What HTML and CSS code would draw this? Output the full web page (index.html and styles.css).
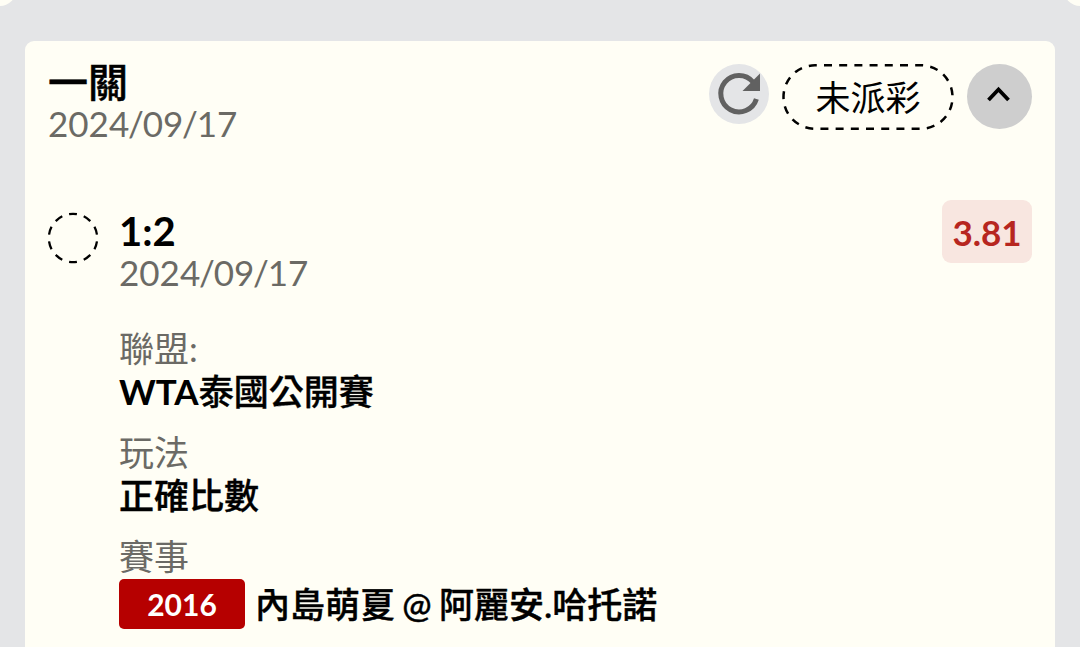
FILE: index.html
```html
<!DOCTYPE html>
<html lang="zh-Hant">
<head>
<meta charset="utf-8">
<title>投注紀錄</title>
<link rel="stylesheet" href="styles.css">
</head>
<body>
<div class="corner corner-left"></div>
<div class="corner corner-right"></div>
<main class="card">
  <header class="head">
    <div class="head-text">
      <h1 class="title">一關</h1>
      <div class="date">2024<span class="slash">/</span>09<span class="slash">/</span>17</div>
    </div>
    <div class="actions">
      <button class="refresh" aria-label="重新整理">
        <svg width="60" height="60" viewBox="0 0 60 60">
          <path d="M47.400 35A18.200 18.200 0 1 1 44 18" fill="none" stroke="#616161" stroke-width="5"/>
          <path d="M51 9.500V27H33.500Z" fill="#616161"/>
        </svg>
      </button>
      <div class="status">
        <svg class="status-border" width="172" height="66" viewBox="0 0 172 66">
          <rect x="1.500" y="1.300" width="169" height="63.400" rx="31.500" pathLength="411" fill="none" stroke="#000" stroke-width="2.500" stroke-dasharray="8 7.222" stroke-dashoffset="-9"/>
        </svg>
        <span class="status-text">未派彩</span>
      </div>
      <button class="collapse" aria-label="收合">
        <svg width="65" height="65" viewBox="0 0 65 65">
          <path d="M21.500 36L31.500 25.500L41.500 36" fill="none" stroke="#000" stroke-width="3.800"/>
        </svg>
      </button>
    </div>
  </header>
  <section class="bet">
    <svg class="marker" width="52" height="52" viewBox="0 0 52 52">
      <circle cx="26" cy="26" r="24.200" pathLength="150" fill="none" stroke="#000" stroke-width="2.300" stroke-dasharray="8 7" stroke-dashoffset="41.500"/>
    </svg>
    <div class="detail">
      <h2 class="pick">1:2</h2>
      <div class="date">2024<span class="slash">/</span>09<span class="slash">/</span>17</div>
      <dl class="fields">
        <dt>聯盟:</dt>
        <dd><span class="league">WTA</span>泰國公開賽</dd>
        <dt>玩法</dt>
        <dd>正確比數</dd>
        <dt>賽事</dt>
        <dd class="match"><span class="code">2016</span><span class="teams">內島萌夏 @ 阿麗安.哈托諾</span></dd>
      </dl>
    </div>
    <div class="odds">3.81</div>
  </section>
</main>
</body>
</html>
```
FILE: styles.css
```css
* { box-sizing: border-box; }
html { overflow: hidden; }
body {
  margin: 0;
  height: 647px;
  overflow: hidden;
  padding: 41px 25px 0;
  background: #e4e5e7;
  color: #000;
  font-family: Lato, "Noto Sans CJK TC", sans-serif;
  font-size: 35px;
  position: relative;
}
h1, h2, dl, dd { margin: 0; }
button { border: 0; padding: 0; border-radius: 50%; }
button svg { display: block; }
.corner {
  position: absolute;
  top: -26px;
  width: 40px;
  height: 32px;
  border-radius: 16px;
  background: #fffef5;
}
.corner-left { left: -24px; }
.corner-right { right: -24px; }
.card {
  height: 606px;
  border-radius: 9px 9px 0 0;
  background: #fffef5;
  padding: 20px 23px 0;
}
.head {
  display: flex;
  justify-content: space-between;
  height: 139px;
}
.title {
  font-size: 40px;
  line-height: 42px;
  font-weight: 500;
  -webkit-text-stroke: 0.5px #000;
}
.date {
  color: #6b6a65;
  line-height: 40px;
}
.slash { margin: 0 -1.2px; }
.actions {
  display: flex;
  align-items: flex-start;
  padding-top: 3px;
}
.refresh {
  width: 60px;
  height: 60px;
  margin-right: 13px;
  background: #e4e5e7;
}
.status {
  position: relative;
  width: 172px;
  height: 66px;
  margin-right: 13px;
  text-align: center;
  line-height: 66px;
}
.status-border { position: absolute; top: 0; left: 0; }
.collapse {
  width: 65px;
  height: 65px;
  background: #cecece;
}
.bet { display: flex; align-items: flex-start; }
.marker { margin: 12px 20px 0 -1px; flex: none; }
.detail { flex: 1; padding-top: 10px; }
.pick {
  font-size: 40px;
  line-height: 42px;
  font-weight: 700;
}
.fields { margin-top: 35px; }
.fields dt {
  color: #6b6a65;
  line-height: 42px;
}
.fields dd {
  font-weight: 500;
  -webkit-text-stroke: 0.4px #000;
  line-height: 45px;
  margin-bottom: 17px;
}
.league { font-weight: 700; -webkit-text-stroke: 0; }
.fields .match {
  display: flex;
  align-items: flex-start;
  gap: 10px;
  margin-top: 2px;
  line-height: 50px;
}
.teams { word-spacing: -1.500px; }
.fields .match .code {
  width: 126px;
  height: 50px;
  border-radius: 5px;
  background: #b60000;
  color: #fff;
  font-size: 30px;
  font-weight: 700;
  -webkit-text-stroke: 0;
  text-align: center;
}
.odds {
  width: 90px;
  height: 63px;
  border-radius: 9px;
  background: #f8e6e0;
  color: #b7261f;
  font-weight: 700;
  line-height: 65px;
  text-align: center;
}
```
